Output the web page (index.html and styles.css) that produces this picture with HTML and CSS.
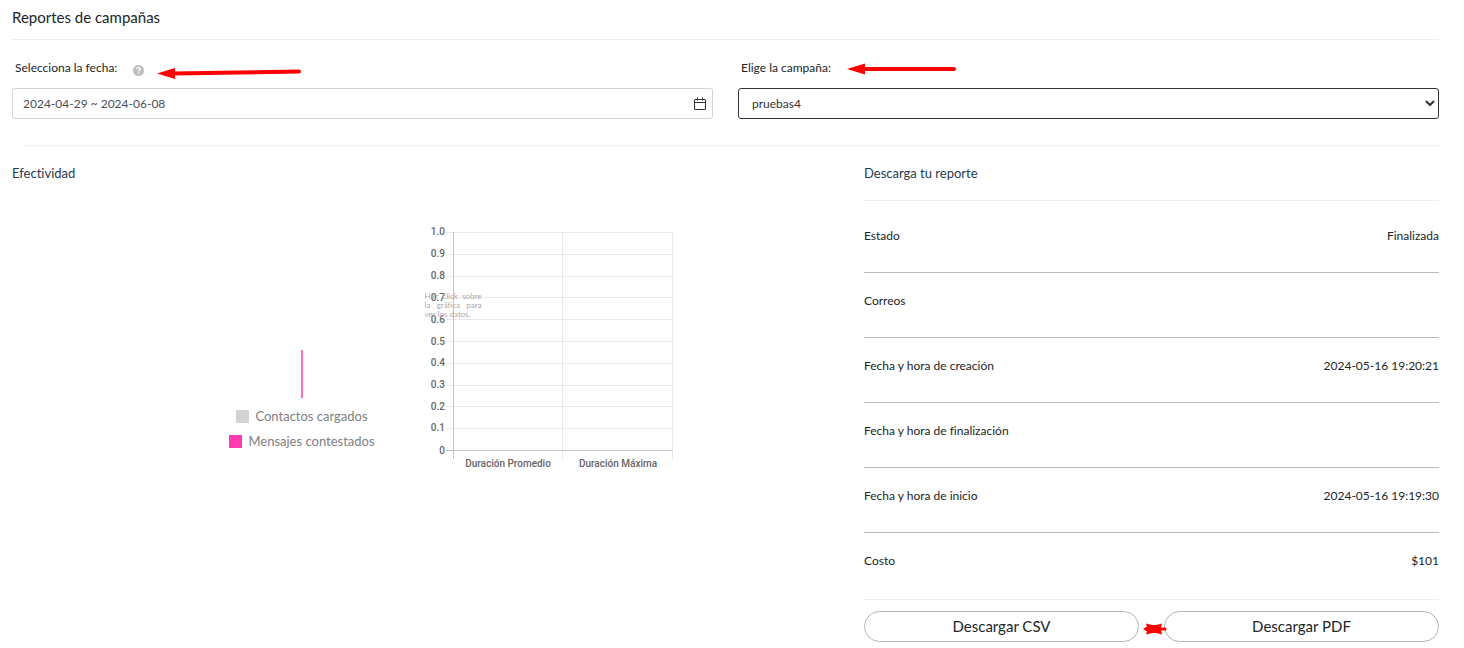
FILE: index.html
```html
<!DOCTYPE html>
<html lang="es">
<head>
  <meta charset="UTF-8" />
  <meta name="viewport" content="width=device-width, initial-scale=1.0" />
  <title>Reportes de campañas</title>
  <link rel="stylesheet" href="styles.css">
</head>
<body>
  <main class="page">
    <h1 class="page-title">Reportes de campañas</h1>

    <form class="filters">
      <div class="field">
        <div class="field-head">
          <label for="fecha">Selecciona la fecha:</label>
          <svg class="help" width="11" height="11" viewBox="0 0 11 11" role="img" aria-label="Ayuda">
            <circle cx="5.5" cy="5.5" r="5.5" fill="#bdbdbd"/>
            <path d="M3.8 4.3c0-2.3 3.5-2.2 3.5-.2 0 1.2-1.6 1.2-1.6 2.4" fill="none" stroke="#fff" stroke-width="1.4"/>
            <rect x="4.9" y="7.3" width="1.5" height="1.4" fill="#fff"/>
          </svg>
          <svg class="arrow arrow-date" width="145" height="12" viewBox="0 0 145 12" aria-hidden="true">
            <path d="M16 6.500 142 4.500" stroke="#fe0000" stroke-width="4" stroke-linecap="round"/>
            <path d="M0 6.500 18 1v11z" fill="#fe0000"/>
          </svg>
        </div>
        <div class="date-box">
          <input type="text" id="fecha" value="2024-04-29 ~ 2024-06-08">
          <svg width="14" height="14" viewBox="0 0 14 14" fill="none" stroke="#333" aria-hidden="true">
            <rect x="1.5" y="2.5" width="11" height="10" rx="0.5"/>
            <path d="M1.5 5.5h11M4.5 .5v3M9.5 .5v3"/>
          </svg>
        </div>
      </div>
      <div class="field">
        <div class="field-head">
          <label for="campana">Elige la campaña:</label>
          <svg class="arrow arrow-campaign" width="109" height="12" viewBox="0 0 109 12" aria-hidden="true">
            <path d="M16 6h91" stroke="#fe0000" stroke-width="4" stroke-linecap="round"/>
            <path d="M0 6 18 .5v11z" fill="#fe0000"/>
          </svg>
        </div>
        <select id="campana" class="campaign">
          <option>pruebas4</option>
        </select>
      </div>
    </form>

    <div class="report">
      <section class="effect">
        <h2 class="section-title">Efectividad</h2>
        <div class="charts">
          <div class="pie">
            <svg width="2" height="48" viewBox="0 0 2 48" aria-hidden="true">
              <rect width="2" height="48" fill="#ff6cc0"/>
            </svg>
            <ul class="legend">
              <li><span class="swatch loaded"></span>Contactos cargados</li>
              <li><span class="swatch answered"></span>Mensajes contestados</li>
            </ul>
          </div>
          <div class="bars">
            <svg width="255" height="250" viewBox="0 0 255 250">
              <path class="grid-line" d="M21 7.500h227M21 29.500h227M21 51.500h227M21 72.500h227M21 94.500h227M21 116.500h227M21 138.500h227M21 160.500h227M21 181.500h227M21 203.500h227M137.500 7v227M247.500 7v227"/>
              <path class="axis-line" d="M28.500 7v227M21 225.500h227"/>
              <g class="tick" text-anchor="end">
                <text x="20" y="10">1.0</text>
                <text x="20" y="32">0.9</text>
                <text x="20" y="54">0.8</text>
                <text x="20" y="76">0.7</text>
                <text x="20" y="98">0.6</text>
                <text x="20" y="120">0.5</text>
                <text x="20" y="141">0.4</text>
                <text x="20" y="163">0.3</text>
                <text x="20" y="185">0.2</text>
                <text x="20" y="206">0.1</text>
                <text x="20" y="229">0</text>
              </g>
              <g class="tick" text-anchor="middle">
                <text x="83" y="242">Duración Promedio</text>
                <text x="193" y="242">Duración Máxima</text>
              </g>
            </svg>
            <p class="hint">Haz click sobre la gráfica para ver los datos.</p>
          </div>
        </div>
      </section>

      <section class="download">
        <h2 class="section-title">Descarga tu reporte</h2>
        <dl class="details">
          <div class="row"><dt>Estado</dt><dd>Finalizada</dd></div>
          <div class="row"><dt>Correos</dt><dd></dd></div>
          <div class="row"><dt>Fecha y hora de creación</dt><dd>2024-05-16 19:20:21</dd></div>
          <div class="row"><dt>Fecha y hora de finalización</dt><dd></dd></div>
          <div class="row"><dt>Fecha y hora de inicio</dt><dd>2024-05-16 19:19:30</dd></div>
          <div class="row"><dt>Costo</dt><dd>$101</dd></div>
        </dl>
        <div class="actions">
          <button type="button">Descargar CSV</button>
          <button type="button">Descargar PDF</button>
          <svg class="double-arrow" width="24" height="12" viewBox="0 0 24 12" aria-hidden="true">
            <path d="M0 6 4 3.500 3 .5 9 2h4l6-1.500-1 4h4a1.500 1.500 0 0 1 0 3h-4l1 4L13 10H9l-6 1.500 1-3z" fill="#fe0000"/>
          </svg>
        </div>
      </section>
    </div>
  </main>
</body>
</html>
```

FILE: styles.css
```css
* {
  box-sizing: border-box;
}

body {
  margin: 0;
  background: #fff;
  color: #212529;
  font-family: Lato, 'Liberation Sans', sans-serif;
  font-size: 12px;
  line-height: 20px;
  font-variant-ligatures: none;
}

.page {
  padding: 0 25px 0 12px;
}

h1, h2, dl, dd, ul, p {
  margin: 0;
  padding: 0;
}

.page-title {
  padding: 7px 0 12px;
  border-bottom: 1px solid #eee;
  font-size: 15px;
  font-weight: 400;
}

.filters {
  display: grid;
  grid-template-columns: 1fr 1fr;
  gap: 25px;
  padding-top: 18px;
}

.field-head {
  display: flex;
  align-items: center;
  height: 20px;
  margin-bottom: 10px;
  padding-left: 3px;
}

.help {
  margin: 4px 0 0 16px;
}

.arrow-date {
  margin: 10px 0 0 13px;
}

.arrow-campaign {
  margin: 2px 0 0 16px;
}

.date-box {
  display: flex;
  align-items: center;
  height: 31px;
  padding: 0 5px 0 10px;
  border: 1px solid #ced4da;
  border-radius: 3px;
}

.date-box input {
  flex: 1;
  min-width: 0;
  padding: 0;
  border: 0;
  outline: 0;
  background: none;
  color: #495057;
  font: inherit;
}

.campaign {
  width: 100%;
  height: 31px;
  padding: 0 0 0 9px;
  border: 1px solid #333;
  border-radius: 3px;
  background: #fff;
  color: #333;
  font: inherit;
}

.report {
  display: grid;
  grid-template-columns: 827fr 575fr;
  gap: 25px;
  position: relative;
  margin-top: 26px;
  padding-top: 18px;
}

.report::before {
  content: '';
  position: absolute;
  top: 0;
  left: 12px;
  right: 0;
  border-top: 1px solid #eee;
}

.section-title {
  color: #1f3a52;
  font-size: 13px;
  font-weight: 400;
}

.charts {
  display: flex;
  justify-content: center;
  align-items: flex-start;
  gap: 50px;
  margin: 42px 0 0 58px;
}

.pie {
  display: flex;
  flex-direction: column;
  align-items: center;
  padding-top: 125px;
}

.legend {
  display: flex;
  flex-direction: column;
  align-items: center;
  gap: 5px;
  margin-top: 8px;
  color: #808080;
  font-size: 13px;
  list-style: none;
}

.legend li {
  display: flex;
  align-items: center;
  gap: 6px;
}

.swatch {
  width: 13px;
  height: 13px;
}

.loaded {
  background: #d3d3d3;
}

.answered {
  background: #ff3bb0;
}

.bars {
  position: relative;
}

.bars svg {
  display: block;
}

.grid-line {
  stroke: #e9e9e9;
}

.axis-line {
  stroke: #c4c4c4;
}

.tick {
  fill: #666;
  font-family: Roboto, 'Liberation Sans', sans-serif;
  font-size: 10px;
  font-weight: 500;
}

.hint {
  position: absolute;
  top: 67px;
  left: 0;
  width: 57px;
  color: #aaa;
  font-size: 8px;
  line-height: 9px;
  text-align: justify;
}

.download .section-title {
  padding-bottom: 17px;
  border-bottom: 1px solid #eee;
}

.details {
  padding: 7px 0 1px;
  border-bottom: 1px solid #eee;
}

.row {
  display: flex;
  justify-content: space-between;
  height: 65px;
  padding-top: 18px;
  border-bottom: 1px solid #bbb;
}

.row:last-child {
  border-bottom: 0;
}

.actions {
  display: grid;
  grid-template-columns: 1fr 1fr;
  gap: 25px;
  position: relative;
  padding-top: 11px;
}

.actions button {
  height: 31px;
  padding: 0 0 2px;
  border: 1px solid #b5b5b5;
  border-radius: 16px;
  background: #fff;
  color: #212529;
  font: inherit;
  font-size: 15px;
}

.double-arrow {
  position: absolute;
  top: 23px;
  left: 50%;
  margin-left: -9px;
}
```
